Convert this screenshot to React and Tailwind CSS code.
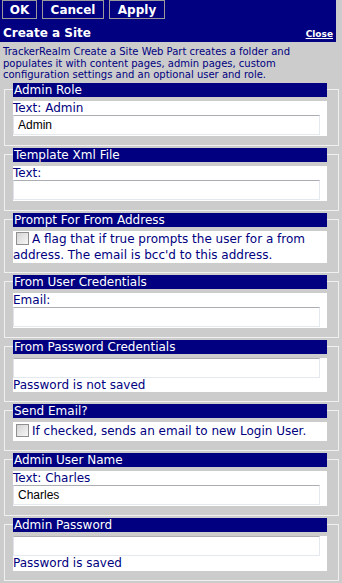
import React from 'react';

const Group = ({ title, children }) => (
  <fieldset className="mt-[2px] ml-[4px] w-[332px] border border-[#f0f0f0] pt-[4px] pr-[11px] pb-[9px] pl-[8px]">
    <legend className="w-[314px] bg-[#000080] px-[1px] text-[12px] leading-[14px] text-white">{title}</legend>
    <div className="bg-white text-[12px] text-[#000080]">{children}</div>
  </fieldset>
);

const TextBox = ({ value = '', type = 'text' }) => (
  <input
    type={type}
    defaultValue={value}
    readOnly
    className="block h-[20px] w-[307px] border border-[#e3e9ef] border-t-[#abadb3] border-l-[#e2e3ea] bg-white px-[4px] font-['Liberation_Sans',sans-serif] text-[12px] text-black outline-none"
  />
);

const Label = ({ children }) => <div className="leading-[14px]">{children}</div>;

const Check = () => (
  <input
    type="checkbox"
    className="mr-[3px] ml-[3px] inline-block h-[13px] w-[13px] appearance-none border border-[#8f8f8f] bg-gradient-to-br from-[#d4d4d4] to-[#f7f7f7] align-[-2px]"
  />
);

export default function App() {
  return (
    <div className="min-h-[583px] w-full bg-[#cccccc] font-['DejaVu_Sans',sans-serif]">
      <div className="w-[336px]">
        <div className="h-[42px] bg-[#000080]">
          <div className="flex gap-[5px] pl-[2px]">
            <button className="h-[19px] w-[35px] border border-[#9a9a9a] bg-[#000080] text-[12px] font-bold text-white">OK</button>
            <button className="h-[19px] w-[62px] border border-[#9a9a9a] bg-[#000080] text-[12px] font-bold text-white">Cancel</button>
            <button className="h-[19px] w-[56px] border border-[#9a9a9a] bg-[#000080] text-[12px] font-bold text-white">Apply</button>
          </div>
          <div className="flex items-end justify-between pt-[7px] pr-[3px] pl-[3px]">
            <span className="text-[12px] leading-[14px] font-bold text-white">Create a Site</span>
            <a href="#" className="text-[9px] leading-[12px] font-bold text-white underline">Close</a>
          </div>
        </div>
        <p className="px-[3px] pt-[4px] text-[10px] leading-[11.5px] text-[#000080]">
          TrackerRealm Create a Site Web Part creates a folder and populates it with content pages, admin pages, custom configuration settings and an optional user and role.
        </p>

        <Group title="Admin Role">
          <Label>Text: Admin</Label>
          <TextBox value="Admin" />
          <div className="h-[1px]" />
        </Group>

        <Group title="Template Xml File">
          <Label>Text:</Label>
          <TextBox />
          <div className="h-[1px]" />
        </Group>

        <Group title="Prompt For From Address">
          <div className="leading-[16px]">
            <Check />A flag that if true prompts the user for a from address. The email is bcc'd to this address.
          </div>
        </Group>

        <Group title="From User Credentials">
          <Label>Email:</Label>
          <TextBox />
          <div className="h-[1px]" />
        </Group>

        <Group title="From Password Credentials">
          <TextBox type="password" />
          <Label>Password is not saved</Label>
        </Group>

        <Group title="Send Email?">
          <div className="leading-[19px]">
            <Check />If checked, sends an email to new Login User.
          </div>
        </Group>

        <Group title="Admin User Name">
          <Label>Text: Charles</Label>
          <TextBox value="Charles" />
          <div className="h-[1px]" />
        </Group>

        <Group title="Admin Password">
          <TextBox type="password" />
          <Label>Password is saved</Label>
          <div className="h-[1px]" />
        </Group>

        <Group title="Admin Email">
          <Label>Email:</Label>
          <TextBox />
        </Group>
      </div>
    </div>
  );
}
